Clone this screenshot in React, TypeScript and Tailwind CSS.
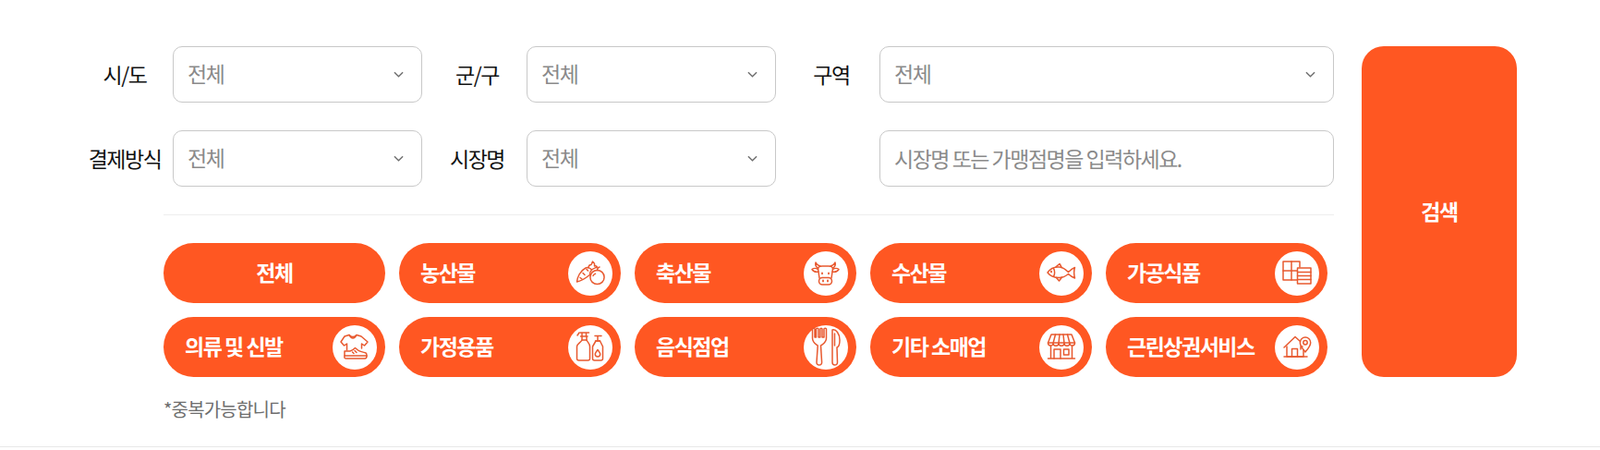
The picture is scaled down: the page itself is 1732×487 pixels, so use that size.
import type { ReactNode } from "react";

interface CategoryItem {
    label: string;
    icon?: ReactNode;
}

const Glyph = ({ children }: { children: ReactNode }) => (
    <svg
        viewBox="0 0 48 48"
        className="w-12 h-12"
        fill="none"
        stroke="#e8592f"
        strokeWidth="1.5"
        strokeLinecap="round"
        strokeLinejoin="round"
    >
        {children}
    </svg>
);

const CarrotIcon = () => (
    <Glyph>
        <path d="M9.5 33 C10 28 13 21 19 18 C21 17 24 18 25.5 20 C24 21.5 23.3 23.5 23.4 25.5 C19 29 13 32.5 9.5 33Z" />
        <path d="M13 28.5l2 1.5M16 23.5l2 2M20 19.5l1.5 1.5" />
        <path d="M22 18 C22 15.5 23.5 14.5 25 14.5 L26.5 11 C28 12 29 14 28.5 16 C30 15.5 31 16 31.5 17 C29.5 18 27 18.5 25.5 20" />
        <circle cx="31.5" cy="28" r="7.6" />
        <path d="M31.5 20.5 C31.5 18.8 32.5 17.5 34 17" />
        <path d="M27 26.5 C27.5 25.3 28.5 24.5 29.5 24.3" />
    </Glyph>
);

const CowIcon = () => (
    <Glyph>
        <path d="M15.5 19 C15.5 17 18 16 20 16 H27 C29 16 31.5 17 31.5 19 L30 29" />
        <path d="M15.5 19 L17 29" />
        <path d="M15.5 18 C13.5 17 12.3 14.5 13 12 C14 14.5 16 15.5 18 16" />
        <path d="M31.5 18 C33.5 17 34.7 14.5 34 12 C33 14.5 31 15.5 29 16" />
        <path d="M15.5 19.5 C13.5 18 10.5 18 9 19.5 C10.5 22 13.5 22.5 16 22" />
        <path d="M31.5 19.5 C33.5 18 36.5 18 38 19.5 C36.5 22 33.5 22.5 31 22" />
        <rect x="16.5" y="28.5" width="14" height="7.5" rx="3.7" />
        <path d="M21 31.5v1M26 31.5v1" strokeWidth="1.8" />
        <path d="M20 23.5v.8M27 23.5v.8" strokeWidth="1.8" />
    </Glyph>
);

const FishIcon = () => (
    <Glyph>
        <path d="M9 23 C12 18.5 17 16.5 22 17 C26 17.5 29 20 31.5 22.5 C33.5 20.5 36 18.5 38.5 17.5 C37.5 20.5 37.5 25 38.5 29 C36 28 33.5 26.5 31.5 24.5 C29 26.5 25.5 28.5 21.5 28.5 C16.5 28.5 12 27 9 23Z" />
        <path d="M18 16.8 L22 13.5 C23 15 23.7 16 24.2 17.6" />
        <path d="M18.5 28.4 L21.5 32 L24.5 28" />
        <path d="M15.5 18.5 C17 21 17 25 15.5 27" />
        <path d="M13 21.6v.8" strokeWidth="1.8" />
    </Glyph>
);

const BoxesIcon = () => (
    <Glyph>
        <path d="M24 31 H9 V11 H27 V17" />
        <path d="M9 21 H24 M18 11 V31" />
        <rect x="24.5" y="18" width="14.5" height="17" />
        <path d="M24.5 22.5 H39 M24.5 26.5 H39 M24.5 30.5 H39" />
    </Glyph>
);

const ClothesIcon = () => (
    <Glyph>
        <path d="M18 10.5 C19.5 13 24.5 13 26 10.5 L31 12 L38 18 L34.5 22 L31.5 20 V25" />
        <path d="M18 10.5 L13 12 L9 18 L12.5 22 L15.5 20 V27" />
        <path d="M18.5 11 C20 15 24 15 25.5 11" />
        <path d="M13 28 H19 C21 27.5 23 26 24.5 24.5 L27.5 27 C30 29 34 29 36 30 C37 30.5 37 32 37 33 H13Z" />
        <path d="M13 33 C12.5 35.5 13 36 15 36 H35 C36.5 36 37 35 37 33" />
        <path d="M24 27.5l2 2M21.5 29l1.5 1.5" />
    </Glyph>
);

const BottlesIcon = () => (
    <Glyph>
        <path d="M13 8 H22.5 M15 8 V12 M19.5 8 V12 M13.5 12 H21 M15 12 V16 M20 12 V16" />
        <path d="M12 8 L10 11" />
        <path d="M15 16 H20 C21.5 19 23.5 20 23.5 23 V36 C23.5 37.2 22.7 38 21.5 38 H11.5 C10.3 38 9.5 37.2 9.5 36 V23 C9.5 20 13.5 19 15 16Z" />
        <path d="M29 11.5 H36 M32 11.5 V17 M29.5 17 H34.5" />
        <path d="M30 17 H34.5 L37.5 23 V36 C37.5 37.2 36.7 38 35.5 38 H28.5 C27.3 38 26.5 37.2 26.5 36 V23 Z" />
        <path d="M32 26.5 C33.8 28.8 34.7 30 34.7 31.3 A2.7 2.7 0 0 1 29.3 31.3 C29.3 30 30.2 28.8 32 26.5Z" />
    </Glyph>
);

const CutleryIcon = () => (
    <Glyph>
        <path d="M9.5 4 V14 C9.5 19 13.5 20.5 15.2 22 L14 40 C13.9 42 15 43 16.8 43 C18.6 43 19.7 42 19.6 40 L18.5 22 C20.2 20.5 24.5 19 24.5 14 V4 C24.5 3 22 3 22 4 V13 H20 V4 C20 3 17.9 3 17.9 4 V13 H16 V4 C16 3 13.5 3 13.5 4 V13 H12 V4 C12 3 9.5 3 9.5 4Z" />
        <path d="M31 5 C35 4 39 9 39 16 C39 21 37.5 23.5 36 24 L36.5 40 C36.6 42 35.5 43 33.7 43 C32 43 31 42 31 40Z" />
        <path d="M33.5 9 V22" />
    </Glyph>
);

const StoreIcon = () => (
    <Glyph>
        <path d="M13 10 H35 L38.5 19 C38.5 23 33 23 33 19.5 C33 23 27 23 27 19.5 C27 23 21 23 21 19.5 C21 23 15 23 15 19.5 C15 23 9.5 23 9.5 19 Z" />
        <path d="M15 19.5 L17.5 10 M21 19.5 L22 10 M27 19.5 L26 10 M33 19.5 L30.5 10 M9.5 19 H38.5" />
        <path d="M12.5 22.5 V36 M35.5 22.5 V36 M9.5 36 H38.5" />
        <path d="M16 36 V26 H23 V36" />
        <path d="M26.5 26 H32 V32 H26.5Z" />
    </Glyph>
);

const HousePinIcon = () => (
    <Glyph>
        <path d="M10 24 L22 12.5 L27.5 17.5" />
        <path d="M13 23 V34 H31 V27" />
        <path d="M10 34 H35" />
        <path d="M18.5 34 V25.5 H24.5 V34" />
        <path d="M28 26 V23 H30" />
        <path d="M33 29 C30 25.5 27.3 22.5 27.3 18.8 A5.7 5.7 0 0 1 38.7 18.8 C38.7 22.5 36 25.5 33 29Z" />
        <circle cx="33" cy="18.8" r="2.2" />
    </Glyph>
);

const categories: CategoryItem[] = [
    { label: "전체" },
    { label: "농산물", icon: <CarrotIcon /> },
    { label: "축산물", icon: <CowIcon /> },
    { label: "수산물", icon: <FishIcon /> },
    { label: "가공식품", icon: <BoxesIcon /> },
    { label: "의류 및 신발", icon: <ClothesIcon /> },
    { label: "가정용품", icon: <BottlesIcon /> },
    { label: "음식점업", icon: <CutleryIcon /> },
    { label: "기타 소매업", icon: <StoreIcon /> },
    { label: "근린상권서비스", icon: <HousePinIcon /> },
];

function SelectBox({ width }: { width: string }) {
    return (
        <div className={`relative h-[61px] ${width}`}>
            <select className="w-full h-full appearance-none rounded-[10px] border border-[#c8c8c8] bg-white pl-[15px] pr-10 pb-[2px] text-[23px] tracking-[-1.5px] text-[#8a8a8a] outline-none">
                <option>전체</option>
            </select>
            <svg
                viewBox="0 0 12 7"
                className="absolute right-[20px] top-[27px] w-[11px] h-[7px] pointer-events-none"
                fill="none"
                stroke="#6f6f6f"
                strokeWidth="1.5"
            >
                <path d="M1 1l5 5 5-5" />
            </svg>
        </div>
    );
}

function FieldLabel({ text, className }: { text: string; className: string }) {
    return (
        <label className={`shrink-0 text-center text-[23px] tracking-[-1.5px] text-[#111] ${className}`}>
            {text}
        </label>
    );
}

function CategoryButton({ item }: { item: CategoryItem }) {
    return (
        <button
            type="button"
            className={`flex items-center h-[65px] rounded-full bg-[#ff5722] text-white text-[23px] font-bold tracking-[-1.5px] ${
                item.icon ? "justify-between pl-[23px] pr-[9px]" : "justify-center"
            }`}
        >
            <span className="pb-[2px]">{item.label}</span>
            {item.icon && (
                <span className="flex items-center justify-center w-12 h-12 rounded-full bg-white">
                    {item.icon}
                </span>
            )}
        </button>
    );
}

export default function App() {
    return (
        <div
            className="h-[487px] bg-white relative"
            style={{ fontFamily: '"Noto Sans CJK KR", "Noto Sans", sans-serif' }}
        >
            <div className="flex pt-[50px] pl-[90px]">
                <div className="w-[1354px]">
                    <div className="flex items-center">
                        <FieldLabel text="시/도" className="w-[90px] mr-[7px]" />
                        <SelectBox width="w-[270px]" />
                        <FieldLabel text="군/구" className="w-[113px] pl-[6px]" />
                        <SelectBox width="w-[270px]" />
                        <FieldLabel text="구역" className="w-[112px] pl-[8px]" />
                        <SelectBox width="w-[492px]" />
                    </div>
                    <div className="flex items-center mt-[30px]">
                        <FieldLabel text="결제방식" className="w-[90px] mr-[7px]" />
                        <SelectBox width="w-[270px]" />
                        <FieldLabel text="시장명" className="w-[113px] pl-[6px]" />
                        <SelectBox width="w-[270px]" />
                        <div className="w-[112px] shrink-0" />
                        <input
                            className="w-[492px] h-[61px] rounded-[10px] border border-[#c8c8c8] bg-white px-[15px] pb-[2px] text-[23px] tracking-[-1.5px] outline-none placeholder:text-[#8a8a8a]"
                            placeholder="시장명 또는 가맹점명을 입력하세요."
                        />
                    </div>
                    <div className="ml-[87px] mt-[30px] border-t border-[#eeeeee] pt-[30px]">
                        <div className="grid grid-cols-[240px_240px_240px_240px_240px] gap-x-[15px] gap-y-[15px]">
                            {categories.map((item) => (
                                <CategoryButton key={item.label} item={item} />
                            ))}
                        </div>
                        <p className="mt-[20px] text-[20px] tracking-[-0.8px] text-[#6e6e6e]">*중복가능합니다</p>
                    </div>
                </div>
                <button
                    type="button"
                    className="ml-[30px] w-[168px] h-[358px] pb-[2px] rounded-[24px] bg-[#ff5722] text-white text-[23px] font-bold tracking-[-1.5px]"
                >
                    검색
                </button>
            </div>
            <div className="absolute left-0 right-0 bottom-[3px] h-px bg-[#e8e8e8]" />
        </div>
    );
}
